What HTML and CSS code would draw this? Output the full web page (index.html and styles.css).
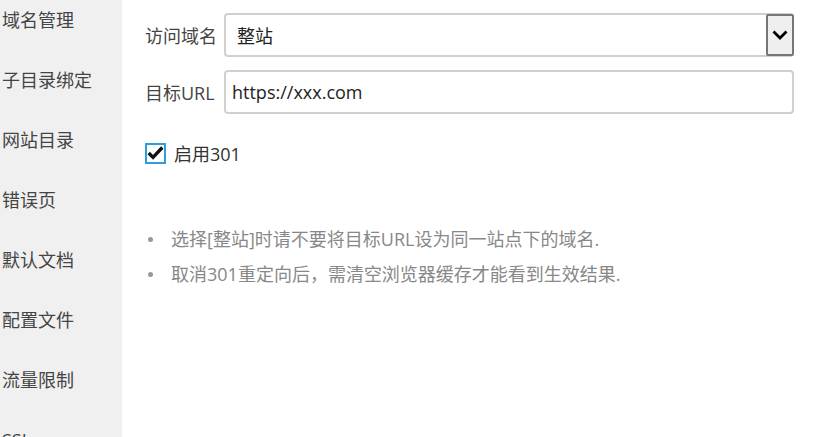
FILE: index.html
```html
<!DOCTYPE html>
<html lang="zh-CN">
<head>
<meta charset="utf-8">
<title>网站设置</title>
<link rel="stylesheet" href="styles.css">
</head>
<body>
<div class="layout">
  <aside class="sidebar">
    <div class="nav-item">域名管理</div>
    <div class="nav-item">子目录绑定</div>
    <div class="nav-item">网站目录</div>
    <div class="nav-item">错误页</div>
    <div class="nav-item">默认文档</div>
    <div class="nav-item">配置文件</div>
    <div class="nav-item">流量限制</div>
    <div class="nav-item">SSL</div>
  </aside>
  <main class="content">
    <div class="form-row">
      <label class="label">访问域名</label>
      <div class="select">
        <span class="select-value">整站</span>
        <span class="select-btn">
          <svg width="16" height="10" viewBox="0 0 16 10"><path d="M1.5 1.5 L8 8 L14.5 1.5" fill="none" stroke="#000" stroke-width="2.8"/></svg>
        </span>
      </div>
    </div>
    <div class="form-row">
      <label class="label">目标URL</label>
      <div class="input">https://xxx.com</div>
    </div>
    <div class="check-row">
      <span class="checkbox">
        <svg width="18" height="16" viewBox="0 0 18 16"><path d="M1.8 8 L6.4 12.6 L16.2 2.2" fill="none" stroke="#111" stroke-width="3.6"/></svg>
      </span>
      <span class="check-label">启用301</span>
    </div>
    <ul class="notes">
      <li>选择[整站]时请不要将目标URL设为同一站点下的域名.</li>
      <li>取消301重定向后，需清空浏览器缓存才能看到生效结果.</li>
    </ul>
  </main>
</div>
</body>
</html>
```

FILE: styles.css
```css
* { box-sizing: border-box; }
html, body {
  margin: 0;
  padding: 0;
  height: 100%;
  overflow: hidden;
  background: #fff;
  font-family: "Open Sans", "Noto Sans CJK SC", sans-serif;
  font-size: 18px;
  color: #444;
}
.layout {
  display: flex;
  height: 437px;
}
.sidebar {
  width: 122px;
  flex: none;
  background: #f0f0f0;
  overflow: hidden;
}
.nav-item {
  height: 60px;
  line-height: 40px;
  padding-left: 2px;
  color: #444;
  white-space: nowrap;
}
.content {
  flex: 1;
  padding: 13px 0 0 23px;
}
.form-row {
  display: flex;
  align-items: center;
  margin-bottom: 13px;
}
.label {
  width: 79px;
  flex: none;
  color: #444;
  white-space: nowrap;
}
.select, .input {
  width: 570px;
  height: 44px;
  border: 2px solid #d0d0d0;
  border-radius: 4px;
  background: #fff;
  display: flex;
  align-items: center;
  color: #222;
  font-size: 18px;
}
.select {
  padding-left: 11px;
  justify-content: space-between;
}
.input {
  padding-left: 6px;
}
.select-btn {
  width: 28px;
  height: 42px;
  margin-right: -2px;
  background: #efefef;
  border: 2px solid #777;
  border-radius: 2px;
  display: flex;
  align-items: center;
  justify-content: center;
}
.check-row {
  display: flex;
  align-items: center;
  margin-top: 26px;
}
.checkbox {
  width: 21px;
  height: 21px;
  border: 2px solid #2a9fd8;
  display: flex;
  align-items: center;
  justify-content: center;
  background: #fff;
}
.check-label {
  margin-left: 8px;
  color: #333;
}
.notes {
  margin: 56px 0 0;
  padding: 0;
  color: #888;
  list-style: none;
}
.notes li {
  line-height: 35px;
  display: flex;
  align-items: center;
}
.notes li::before {
  content: "";
  width: 5px;
  height: 5px;
  border-radius: 50%;
  background: #999;
  margin: 0 18px 0 3px;
  flex: none;
}
```
